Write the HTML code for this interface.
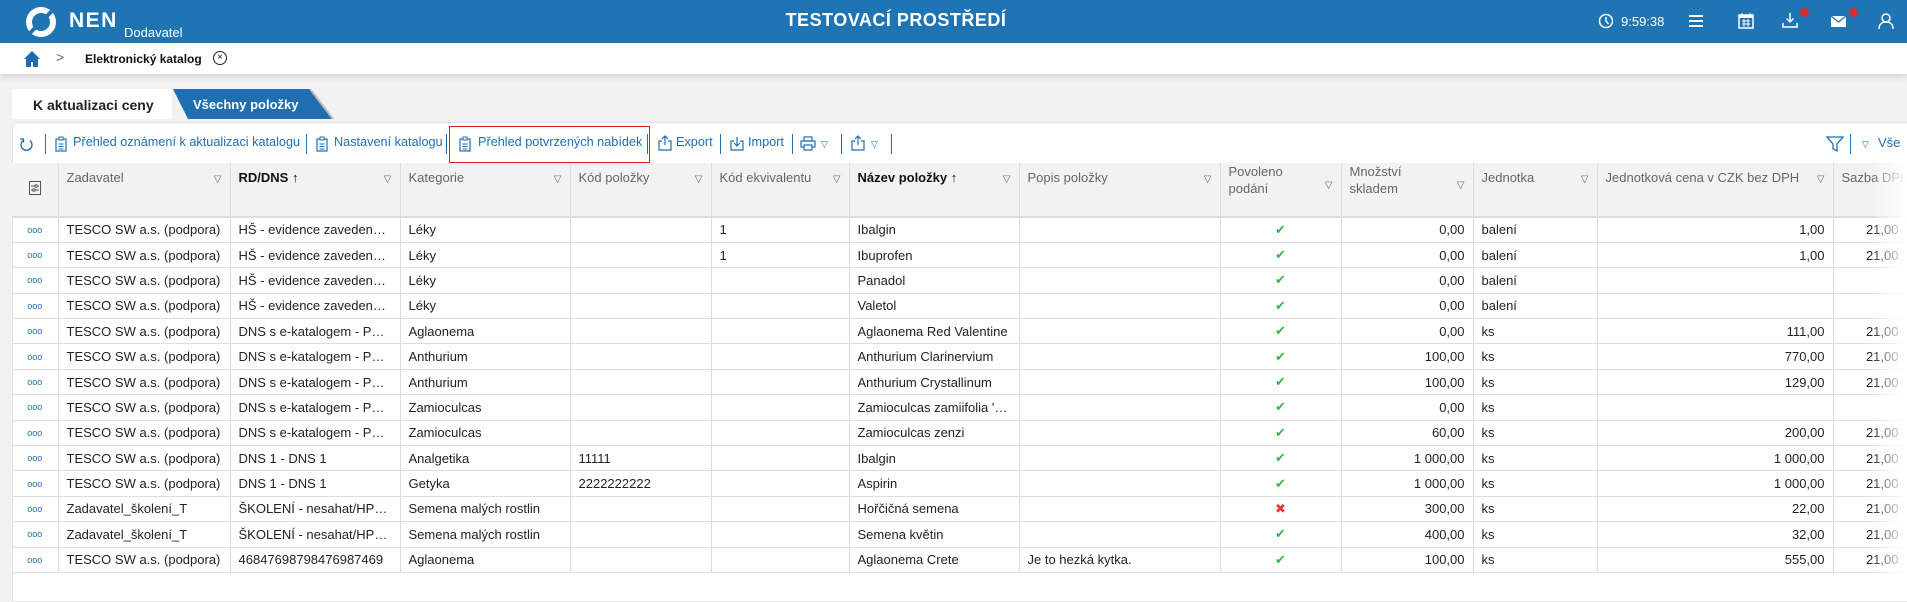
<!DOCTYPE html>
<html><head><meta charset="utf-8">
<style>
*{box-sizing:border-box;margin:0;padding:0}
body{width:1907px;height:590px;overflow:hidden;background:#f2f2f2;font-family:"Liberation Sans",Arial,sans-serif;position:relative;color:#222}
.top{position:absolute;left:0;top:0;width:1907px;height:43px;background:#1f75b4;color:#fff}
.bc{position:absolute;left:0;top:43px;width:1907px;height:31px;background:#fff;box-shadow:0 3px 6px rgba(0,0,0,.12)}
.abs{position:absolute}
.tab1{position:absolute;left:12px;top:89px;width:160px;height:30px;background:#fff;font-weight:bold;font-size:14px;padding:8px 0 0 21px;white-space:nowrap}
.tab2{position:absolute;left:170px;top:89px;height:30px;width:165px}
.panel{position:absolute;left:12px;top:122px;width:1900px;height:480px;background:#fff;border:1px solid #e3e3e3;border-radius:6px 6px 0 0}
.tb{position:absolute;top:135px;font-size:12.7px;color:#1f6fb0;white-space:nowrap}
.sep{position:absolute;top:134px;width:1px;height:20px;background:#1f6fb0}
table{position:absolute;left:12px;top:163px;width:1895px;border-collapse:collapse;table-layout:fixed;font-size:13px}
th{background:#f2f2f2;color:#666;font-weight:normal;text-align:left;vertical-align:top;height:54px;padding:7px 8px;border-right:1px solid #ddd;border-bottom:2px solid #ddd;position:relative;line-height:16px;white-space:nowrap;overflow:hidden}
th .f{position:absolute;right:8px;top:9px;font-size:10px;color:#666}
th b{color:#111}
td{height:25.4px;padding:0 8px;border-right:1px solid #ddd;border-bottom:1px solid #ddd;white-space:nowrap;overflow:hidden;text-overflow:ellipsis}
td.r{text-align:right}
td.c{text-align:center;color:#3cb44b;font-size:13px}
td.dots{color:#1f6fb0;font-size:9px;text-align:center}
.fade{position:absolute;left:1870px;top:163px;width:37px;height:420px;background:linear-gradient(90deg,rgba(255,255,255,0),#fff)}
</style></head><body>
<div class="top">
 <svg class="abs" style="left:24px;top:6px" width="34" height="32" viewBox="0 0 34 32"><circle cx="17" cy="16" r="12" fill="none" stroke="#fff" stroke-width="6"/><path d="M5 28 L29 4" stroke="#1f75b4" stroke-width="4"/></svg>
 <div class="abs" style="left:69px;top:9px;font-size:21px;font-weight:bold;letter-spacing:1.5px">NEN</div>
 <div class="abs" style="left:124px;top:25px;font-size:13px">Dodavatel</div>
 <div class="abs" style="left:0;width:1792px;top:10px;text-align:center;font-size:18px;font-weight:bold;letter-spacing:.5px">TESTOVACÍ PROSTŘEDÍ</div>
 <svg class="abs" style="left:1598px;top:13px" width="16" height="16"><circle cx="8" cy="8" r="6.5" fill="none" stroke="#fff" stroke-width="1.5"/><path d="M8 4v4l2.5 3" stroke="#fff" stroke-width="1.5" fill="none"/></svg>
 <div class="abs" style="left:1621px;top:14px;font-size:13px">9:59:38</div>
 <svg class="abs" style="left:1688px;top:13px" width="16" height="16"><path d="M1 3h14M1 8h14M1 13h14" stroke="#fff" stroke-width="2"/></svg>
 <svg class="abs" style="left:1738px;top:12px" width="16" height="17"><rect x="1" y="3" width="14" height="13" fill="none" stroke="#fff" stroke-width="1.5"/><rect x="1" y="3" width="14" height="3" fill="#fff"/><path d="M4 1v3M12 1v3M4 9h8M4 12h8M6 7v8M10 7v8" stroke="#fff" stroke-width="1"/></svg>
 <svg class="abs" style="left:1782px;top:12px" width="16" height="17"><path d="M8 1v9M4.5 6.5 8 10l3.5-3.5M1 11v4h14v-4" stroke="#fff" stroke-width="1.5" fill="none"/></svg>
 <div class="abs" style="left:1800px;top:8px;width:9px;height:9px;border-radius:50%;background:#d32f2f"></div>
 <svg class="abs" style="left:1830px;top:15px" width="17" height="13"><rect x="1" y="1" width="15" height="11" fill="#fff"/><path d="M1 1l7.5 6 7.5-6" stroke="#1f75b4" stroke-width="1.3" fill="none"/></svg>
 <div class="abs" style="left:1849px;top:8px;width:9px;height:9px;border-radius:50%;background:#d32f2f"></div>
 <svg class="abs" style="left:1878px;top:12px" width="16" height="18"><circle cx="8" cy="6" r="4" fill="none" stroke="#fff" stroke-width="1.5"/><path d="M1 17c0-5 3-7 7-7s7 2 7 7" fill="none" stroke="#fff" stroke-width="1.5"/></svg>
</div>
<div class="bc">
 <svg class="abs" style="left:24px;top:7px" width="16" height="17"><path d="M8 1 0 9h2v8h5v-5h2v5h5V9h2z" fill="#1f6fb0"/></svg>
 <div class="abs" style="left:56px;top:6px;font-size:14px;color:#666">&gt;</div>
 <div class="abs" style="left:85px;top:9px;font-size:12px;font-weight:bold;color:#111">Elektronický katalog</div>
 <div class="abs" style="left:213px;top:8px;width:14px;height:14px;border:1.3px solid #222;border-radius:50%;font-size:10px;line-height:11px;text-align:center">×</div>
</div>
<div class="tab1">K aktualizaci ceny</div>
<svg class="tab2" width="165" height="30"><path d="M3 0H140L163 30H18Z" fill="#1f6fb0"/><path d="M140 0l23 30" stroke="#bbb" stroke-width="2"/><text x="23" y="20" fill="#fff" font-family="Liberation Sans" font-weight="bold" font-size="13">Všechny položky</text></svg>
<div class="panel"></div>
<div class="abs" style="left:0;top:120px;width:12px;height:470px;background:#f2f2f2"></div>
<svg class="abs" style="left:19px;top:137px" width="14" height="14"><path d="M11 3.5A5.5 5.5 0 1 1 4 3.5" fill="none" stroke="#1f6fb0" stroke-width="1.3"/><path d="M1 2h3.5v3.5" fill="none" stroke="#1f6fb0" stroke-width="1.3"/></svg>
<div class="sep" style="left:45px"></div>
<svg class="abs" style="left:55px;top:136px" width="12" height="16"><rect x="1" y="3" width="10" height="12" fill="none" stroke="#1f6fb0" stroke-width="1.2"/><rect x="4" y="1" width="4" height="3" fill="#fff" stroke="#1f6fb0"/><path d="M3.5 8h5M3.5 10.5h5M3.5 13h5" stroke="#1f6fb0"/></svg>
<div class="tb" style="left:73px">Přehled oznámení k aktualizaci katalogu</div>
<div class="sep" style="left:306px"></div>
<svg class="abs" style="left:316px;top:136px" width="12" height="16"><rect x="1" y="3" width="10" height="12" fill="none" stroke="#1f6fb0" stroke-width="1.2"/><rect x="4" y="1" width="4" height="3" fill="#fff" stroke="#1f6fb0"/><path d="M3.5 8h5M3.5 10.5h5M3.5 13h5" stroke="#1f6fb0"/></svg>
<div class="tb" style="left:334px">Nastavení katalogu</div>
<div class="sep" style="left:446px"></div>
<div class="abs" style="left:449px;top:126px;width:201px;height:37px;border:1px solid #e02020"></div>
<svg class="abs" style="left:459px;top:136px" width="12" height="16"><rect x="1" y="3" width="10" height="12" fill="none" stroke="#1f6fb0" stroke-width="1.2"/><rect x="4" y="1" width="4" height="3" fill="#fff" stroke="#1f6fb0"/><path d="M3.5 8h5M3.5 10.5h5M3.5 13h5" stroke="#1f6fb0"/></svg>
<div class="tb" style="left:478px">Přehled potvrzených nabídek</div>
<div class="sep" style="left:647px"></div>
<svg class="abs" style="left:658px;top:135px" width="14" height="16"><path d="M4 6H1v9h12V6h-3M7 10V1M4 4l3-3 3 3" fill="none" stroke="#1f6fb0" stroke-width="1.2"/></svg>
<div class="tb" style="left:676px">Export</div>
<div class="sep" style="left:720px"></div>
<svg class="abs" style="left:730px;top:135px" width="14" height="16"><path d="M4 6H1v9h12V6h-3M7 2v9M4 8l3 3 3-3" fill="none" stroke="#1f6fb0" stroke-width="1.2"/></svg>
<div class="tb" style="left:748px">Import</div>
<div class="sep" style="left:792px"></div>
<svg class="abs" style="left:800px;top:136px" width="16" height="15"><rect x="4" y="1" width="8" height="4" fill="none" stroke="#1f6fb0" stroke-width="1.2"/><rect x="1" y="5" width="14" height="6" fill="none" stroke="#1f6fb0" stroke-width="1.2"/><rect x="4" y="9" width="8" height="5" fill="#fff" stroke="#1f6fb0" stroke-width="1.2"/></svg>
<div class="tb" style="left:821px;font-size:9px;top:139px">▽</div>
<div class="sep" style="left:841px"></div>
<svg class="abs" style="left:851px;top:135px" width="14" height="16"><path d="M4 6H1v9h12V6h-3M7 10V1M4 4l3-3 3 3" fill="none" stroke="#1f6fb0" stroke-width="1.2"/></svg>
<div class="tb" style="left:871px;font-size:9px;top:139px">▽</div>
<div class="sep" style="left:891px"></div>
<svg class="abs" style="left:1826px;top:135px" width="18" height="18"><path d="M1 2h16l-6 7v7l-4-2V9z" fill="none" stroke="#1f6fb0" stroke-width="1.3"/></svg>
<div class="sep" style="left:1850px"></div>
<div class="tb" style="left:1862px;font-size:9px;top:139px">▽</div>
<div class="tb" style="left:1878px;font-size:13px">Vše</div>

<table>
<colgroup><col style="width:46px"><col style="width:172px"><col style="width:170px"><col style="width:170px"><col style="width:141px"><col style="width:138px"><col style="width:170px"><col style="width:201px"><col style="width:121px"><col style="width:132px"><col style="width:124px"><col style="width:236px"><col style="width:74px"></colgroup>
<tr><th style="vertical-align:middle;text-align:center"><svg width="12" height="14"><rect x=".5" y=".5" width="11" height="13" fill="none" stroke="#555"/><path d="M2 5h8M2 9h8" stroke="#555"/><circle cx="7" cy="5" r="1.3" fill="#fff" stroke="#555"/><circle cx="5" cy="9" r="1.3" fill="#fff" stroke="#555"/></svg></th>
<th>Zadavatel<span class="f">▽</span></th><th><b>RD/DNS</b> <span style="color:#111">↑</span><span class="f">▽</span></th><th>Kategorie<span class="f">▽</span></th><th>Kód položky<span class="f">▽</span></th><th>Kód ekvivalentu<span class="f">▽</span></th><th><b>Název položky</b> <span style="color:#111">↑</span><span class="f">▽</span></th><th>Popis položky<span class="f">▽</span></th><th style="padding-top:0;line-height:17px">Povoleno<br>podání<span class="f" style="top:14px">▽</span></th><th style="padding-top:0;line-height:17px">Množství<br>skladem<span class="f" style="top:14px">▽</span></th><th>Jednotka<span class="f">▽</span></th><th>Jednotková cena v CZK bez DPH<span class="f">▽</span></th><th style="border-right:0">Sazba DPH</th></tr>
<tr><td class="dots">ooo</td><td>TESCO SW a.s. (podpora)</td><td>HŠ - evidence zavedeného</td><td>Léky</td><td></td><td>1</td><td>Ibalgin</td><td></td><td class="c">✔</td><td class="r">0,00</td><td>balení</td><td class="r">1,00</td><td class="r">21,00</td></tr>
<tr><td class="dots">ooo</td><td>TESCO SW a.s. (podpora)</td><td>HŠ - evidence zavedeného</td><td>Léky</td><td></td><td>1</td><td>Ibuprofen</td><td></td><td class="c">✔</td><td class="r">0,00</td><td>balení</td><td class="r">1,00</td><td class="r">21,00</td></tr>
<tr><td class="dots">ooo</td><td>TESCO SW a.s. (podpora)</td><td>HŠ - evidence zavedeného</td><td>Léky</td><td></td><td></td><td>Panadol</td><td></td><td class="c">✔</td><td class="r">0,00</td><td>balení</td><td class="r"></td><td class="r"></td></tr>
<tr><td class="dots">ooo</td><td>TESCO SW a.s. (podpora)</td><td>HŠ - evidence zavedeného</td><td>Léky</td><td></td><td></td><td>Valetol</td><td></td><td class="c">✔</td><td class="r">0,00</td><td>balení</td><td class="r"></td><td class="r"></td></tr>
<tr><td class="dots">ooo</td><td>TESCO SW a.s. (podpora)</td><td>DNS s e-katalogem - Pokojové</td><td>Aglaonema</td><td></td><td></td><td>Aglaonema Red Valentine</td><td></td><td class="c">✔</td><td class="r">0,00</td><td>ks</td><td class="r">111,00</td><td class="r">21,00</td></tr>
<tr><td class="dots">ooo</td><td>TESCO SW a.s. (podpora)</td><td>DNS s e-katalogem - Pokojové</td><td>Anthurium</td><td></td><td></td><td>Anthurium Clarinervium</td><td></td><td class="c">✔</td><td class="r">100,00</td><td>ks</td><td class="r">770,00</td><td class="r">21,00</td></tr>
<tr><td class="dots">ooo</td><td>TESCO SW a.s. (podpora)</td><td>DNS s e-katalogem - Pokojové</td><td>Anthurium</td><td></td><td></td><td>Anthurium Crystallinum</td><td></td><td class="c">✔</td><td class="r">100,00</td><td>ks</td><td class="r">129,00</td><td class="r">21,00</td></tr>
<tr><td class="dots">ooo</td><td>TESCO SW a.s. (podpora)</td><td>DNS s e-katalogem - Pokojové</td><td>Zamioculcas</td><td></td><td></td><td>Zamioculcas zamiifolia 'Raven'</td><td></td><td class="c">✔</td><td class="r">0,00</td><td>ks</td><td class="r"></td><td class="r"></td></tr>
<tr><td class="dots">ooo</td><td>TESCO SW a.s. (podpora)</td><td>DNS s e-katalogem - Pokojové</td><td>Zamioculcas</td><td></td><td></td><td>Zamioculcas zenzi</td><td></td><td class="c">✔</td><td class="r">60,00</td><td>ks</td><td class="r">200,00</td><td class="r">21,00</td></tr>
<tr><td class="dots">ooo</td><td>TESCO SW a.s. (podpora)</td><td>DNS 1 - DNS 1</td><td>Analgetika</td><td>11111</td><td></td><td>Ibalgin</td><td></td><td class="c">✔</td><td class="r">1 000,00</td><td>ks</td><td class="r">1 000,00</td><td class="r">21,00</td></tr>
<tr><td class="dots">ooo</td><td>TESCO SW a.s. (podpora)</td><td>DNS 1 - DNS 1</td><td>Getyka</td><td>2222222222</td><td></td><td>Aspirin</td><td></td><td class="c">✔</td><td class="r">1 000,00</td><td>ks</td><td class="r">1 000,00</td><td class="r">21,00</td></tr>
<tr><td class="dots">ooo</td><td>Zadavatel_školení_T</td><td>ŠKOLENÍ - nesahat/HP_test</td><td>Semena malých rostlin</td><td></td><td></td><td>Hořčičná semena</td><td></td><td class="c" style="color:#e53935">✖</td><td class="r">300,00</td><td>ks</td><td class="r">22,00</td><td class="r">21,00</td></tr>
<tr><td class="dots">ooo</td><td>Zadavatel_školení_T</td><td>ŠKOLENÍ - nesahat/HP_test</td><td>Semena malých rostlin</td><td></td><td></td><td>Semena květin</td><td></td><td class="c">✔</td><td class="r">400,00</td><td>ks</td><td class="r">32,00</td><td class="r">21,00</td></tr>
<tr><td class="dots">ooo</td><td>TESCO SW a.s. (podpora)</td><td>46847698798476987469</td><td>Aglaonema</td><td></td><td></td><td>Aglaonema Crete</td><td>Je to hezká kytka.</td><td class="c">✔</td><td class="r">100,00</td><td>ks</td><td class="r">555,00</td><td class="r">21,00</td></tr>
</table>
<div class="fade"></div>
</body></html>
